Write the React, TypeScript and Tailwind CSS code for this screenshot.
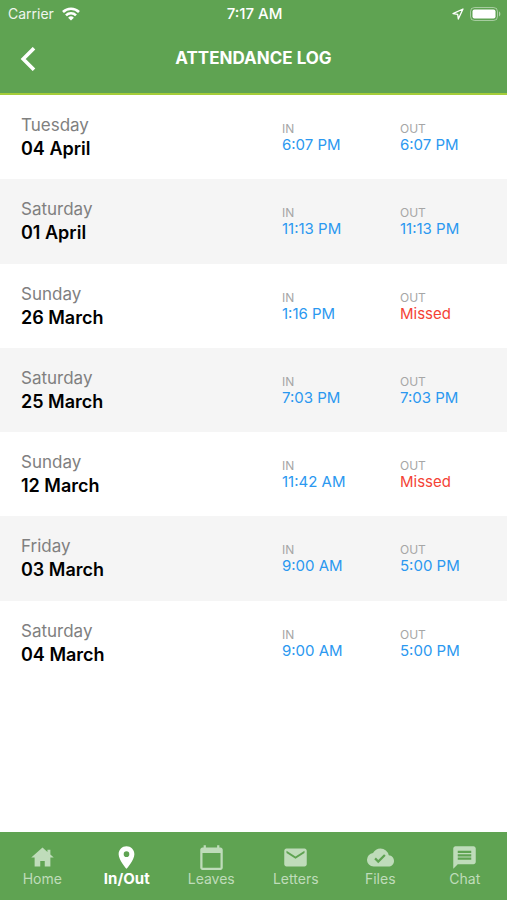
import { MdCalendarToday, MdCloudDone, MdEmail, MdMessage, MdPlace } from 'react-icons/md';

interface Log {
  day: string;
  date: string;
  timeIn: string;
  timeOut?: string;
}

const logs: Log[] = [
  { day: 'Tuesday', date: '04 April', timeIn: '6:07 PM', timeOut: '6:07 PM' },
  { day: 'Saturday', date: '01 April', timeIn: '11:13 PM', timeOut: '11:13 PM' },
  { day: 'Sunday', date: '26 March', timeIn: '1:16 PM' },
  { day: 'Saturday', date: '25 March', timeIn: '7:03 PM', timeOut: '7:03 PM' },
  { day: 'Sunday', date: '12 March', timeIn: '11:42 AM' },
  { day: 'Friday', date: '03 March', timeIn: '9:00 AM', timeOut: '5:00 PM' },
  { day: 'Saturday', date: '04 March', timeIn: '9:00 AM', timeOut: '5:00 PM' },
];

// house with a chimney on the right
function HomeIcon({ className }: { className?: string }) {
  return (
    <svg className={className} viewBox="0 0 24 24" fill="currentColor">
      <path d="M10 20v-5h4v5h5v-8h3l-3-2.7V5h-2.6v2L12 3 2 12h3v8z" />
    </svg>
  );
}

const tabs = [
  { name: 'Home', icon: HomeIcon },
  { name: 'In/Out', icon: MdPlace, active: true },
  { name: 'Leaves', icon: MdCalendarToday },
  { name: 'Letters', icon: MdEmail },
  { name: 'Files', icon: MdCloudDone },
  { name: 'Chat', icon: MdMessage },
];

function StatusBar() {
  return (
    <div className="grid grid-cols-3 items-center h-7 pl-2 pr-1.5">
      <div className="flex items-center gap-2 text-sm">
        <span className="opacity-90">Carrier</span>
        <svg className="w-[18px] h-[14px]" viewBox="0 0 18 14" fill="none" stroke="currentColor" strokeWidth="2.6">
          <path d="M1 5a11.4 11.4 0 0 1 16 0" />
          <path d="M4 8.3a7 7 0 0 1 10 0" />
          <path d="M9 13.6 6.1 10.7a4.1 4.1 0 0 1 5.8 0z" fill="currentColor" stroke="none" />
        </svg>
      </div>
      <span className="text-center text-[15px] font-medium">7:17 AM</span>
      <div className="flex items-center justify-end gap-1.5">
        <svg className="w-3 h-3" viewBox="0 0 12 12" fill="none" stroke="currentColor" strokeWidth="1.3" strokeLinejoin="round">
          <path d="M11 1 1 5.6l4.7.7.6 4.7z" />
        </svg>
        <svg className="w-[31px] h-[14px]" viewBox="0 0 31 14" fill="none">
          <rect x="0.5" y="0.5" width="27" height="13" rx="4" stroke="#fff" strokeOpacity="0.45" />
          <rect x="2.5" y="2.5" width="23" height="9" rx="2" fill="#fff" />
          <path d="M29 4.6c1.8.6 1.8 4.2 0 4.8z" fill="#fff" fillOpacity="0.5" />
        </svg>
      </div>
    </div>
  );
}

function Time({ label, value }: { label: string; value?: string }) {
  return (
    <div>
      <dt className="text-xs leading-4 text-[#a6a6a6]">{label}</dt>
      <dd className={value ? 'text-[15px] leading-4 text-[#2b98f0]' : 'text-[15px] leading-4 text-[#f44336]'}>
        {value ?? 'Missed'}
      </dd>
    </div>
  );
}

export default function App() {
  return (
    <div className="min-h-screen flex flex-col bg-white font-[Inter,sans-serif]">
      <header className="bg-[#5fa352] text-white border-b-2 border-[#a5cd39]">
        <StatusBar />
        <div className="grid grid-cols-[1fr_auto_1fr] items-center h-[65px] px-4 pb-1">
          <button type="button" aria-label="Back" className="w-6 h-10 flex items-center justify-center">
            <svg className="w-4 h-6" viewBox="0 0 16 24" fill="none" stroke="currentColor" strokeWidth="3.6">
              <path d="M14 1.2 3.2 12 14 22.8" />
            </svg>
          </button>
          <h1 className="text-[17px] font-bold">ATTENDANCE LOG</h1>
        </div>
      </header>

      <main className="flex-1">
        <ul>
          {logs.map((log) => (
            <li
              key={log.date}
              className="flex h-[84px] pl-[21px] even:bg-[#f5f5f5] nth-[4n+2]:h-[85px]"
            >
              <div className="flex-1 pt-[18px]">
                <p className="text-[17px] leading-6 text-[#808080]">{log.day}</p>
                <p className="text-lg leading-6 font-semibold text-black">{log.date}</p>
              </div>
              <dl className="grid grid-cols-[118px_107px] pt-[26px]">
                <Time label="IN" value={log.timeIn} />
                <Time label="OUT" value={log.timeOut} />
              </dl>
            </li>
          ))}
        </ul>
      </main>

      <nav className="grid grid-cols-6 h-[68px] bg-[#5fa352] text-white">
        {tabs.map(({ name, icon: Icon, active }) => (
          <a
            key={name}
            href="#"
            aria-current={active ? 'page' : undefined}
            className={
              active
                ? 'flex flex-col items-center pt-3 text-[15px] font-bold'
                : 'flex flex-col items-center pt-3 text-sm text-[#bfdcba]'
            }
          >
            <Icon className="w-[27px] h-[27px]" />
            <span className="leading-4">{name}</span>
          </a>
        ))}
      </nav>
    </div>
  );
}
